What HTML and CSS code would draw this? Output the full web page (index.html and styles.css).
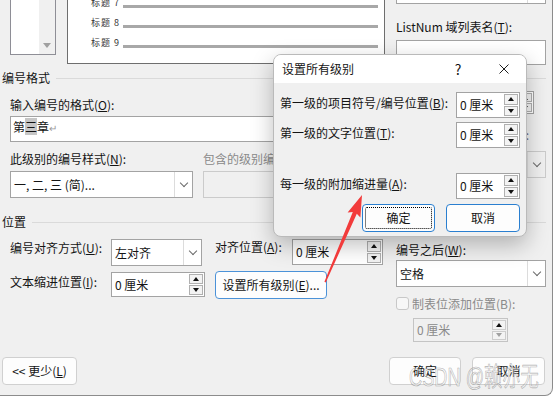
FILE: index.html
```html
<!DOCTYPE html>
<html lang="zh-CN">
<head>
  <meta charset="UTF-8">
  <meta name="viewport" content="width=device-width, initial-scale=1.0">
  <title>定义新多级列表</title>
  <link rel="stylesheet" href="styles.css">
</head>
<body>
  <div class="dlg">
    <div class="top">
      <div class="levels">
        <div class="levels-list"></div>
        <div class="levels-bar"><span class="tri-down"></span></div>
      </div>
      <div class="preview">
        <div class="pv-row first"><span class="pv-label">标题 7</span><span class="pv-line"></span></div>
        <div class="pv-row"><span class="pv-label">标题 8</span><span class="pv-line"></span></div>
        <div class="pv-row"><span class="pv-label">标题 9</span><span class="pv-line"></span></div>
      </div>
      <div class="side">
        <div class="combo cut"><span class="val"></span><span class="drop"></span></div>
        <div class="lbl listnum">ListNum 域列表名(<u>T</u>):</div>
        <div class="box listnum-box"></div>
      </div>
    </div>

    <div class="section">编号格式</div>
    <div class="band">
      <div class="left">
        <div class="lbl fmt-lbl">输入编号的格式(<u>O</u>):</div>
        <div class="box fmt">第<span class="hl">三</span>章<span class="ret">↵</span></div>
        <div class="pair">
          <div class="col-a">
            <div class="lbl">此级别的编号样式(<u>N</u>):</div>
            <div class="combo"><span class="val">一, 二, 三 (简)...</span><span class="drop"></span></div>
          </div>
          <div class="col-b">
            <div class="lbl off">包含的级别编号来自(<u>D</u>):</div>
            <div class="combo off"><span class="val"></span><span class="drop"></span></div>
          </div>
        </div>
      </div>
      <div class="right">
        <div class="start-row">
          <span class="lbl">起始编号(<u>S</u>):</span>
          <div class="spin start"><span class="val">三</span><span class="arrows"><span class="arr"><i class="up"></i></span><span class="arr"><i class="dn"></i></span></span></div>
        </div>
        <div class="lbl off restart-lbl">重新开始列表的间隔(<u>R</u>):</div>
        <div class="combo off restart"><span class="val"></span><span class="drop"></span></div>
      </div>
    </div>

    <div class="section pos">位置</div>
    <div class="band">
      <div class="left">
        <div class="row r1">
          <span class="lbl w-align">编号对齐方式(<u>U</u>):</span>
          <div class="combo align"><span class="val">左对齐</span><span class="drop"></span></div>
          <span class="lbl w-at">对齐位置(<u>A</u>):</span>
          <div class="spin at"><span class="val">0 厘米</span><span class="arrows"><span class="arr"><i class="up"></i></span><span class="arr"><i class="dn"></i></span></span></div>
        </div>
        <div class="row r2">
          <span class="lbl w-indent">文本缩进位置(<u>I</u>):</span>
          <div class="spin indent"><span class="val">0 厘米</span><span class="arrows"><span class="arr"><i class="up"></i></span><span class="arr"><i class="dn"></i></span></span></div>
          <div class="btn setall">设置所有级别(<u>E</u>)...</div>
        </div>
      </div>
      <div class="right">
        <div class="lbl after-lbl">编号之后(<u>W</u>):</div>
        <div class="combo after"><span class="val">空格</span><span class="drop"></span></div>
        <div class="check-row"><span class="check"></span><span class="lbl off">制表位添加位置(B):</span></div>
        <div class="spin tabpos off"><span class="val">0 厘米</span><span class="arrows"><span class="arr"><i class="up"></i></span><span class="arr"><i class="dn"></i></span></span></div>
      </div>
    </div>

    <div class="foot">
      <div class="btn less">&lt;&lt; 更少(<u>L</u>)</div>
      <div class="btn ok">确定</div>
      <div class="btn cancel">取消</div>
    </div>

    <!-- popup dialog on top -->
    <div class="sub">
      <div class="sub-title">
        <span class="sub-name">设置所有级别</span>
        <span class="sub-help">?</span>
        <span class="sub-close"><svg width="10" height="10" viewBox="0 0 10 10"><path d="M0.5 0.5 L9.5 9.5 M9.5 0.5 L0.5 9.5" stroke="#1e1e1e" stroke-width="1" fill="none"/></svg></span>
      </div>
      <div class="sub-body">
        <div class="sub-row r-b">
          <span class="lbl">第一级的项目符号/编号位置(<u>B</u>):</span>
          <div class="spin"><span class="val">0 厘米</span><span class="arrows"><span class="arr"><i class="up"></i></span><span class="arr"><i class="dn"></i></span></span></div>
        </div>
        <div class="sub-row r-t">
          <span class="lbl">第一级的文字位置(<u>T</u>):</span>
          <div class="spin"><span class="val">0 厘米</span><span class="arrows"><span class="arr"><i class="up"></i></span><span class="arr"><i class="dn"></i></span></span></div>
        </div>
        <div class="sub-row r-a">
          <span class="lbl">每一级的附加缩进量(<u>A</u>):</span>
          <div class="spin"><span class="val">0 厘米</span><span class="arrows"><span class="arr"><i class="up"></i></span><span class="arr"><i class="dn"></i></span></span></div>
        </div>
        <div class="sub-foot">
          <div class="btn blue focus">确定</div>
          <div class="btn blue">取消</div>
        </div>
      </div>
    </div>

    <svg class="arrow" width="50" height="100" viewBox="0 0 50 100">
      <polygon points="42,5 40.4,27.6 36.8,23.8 5.8,92.4 4.4,91.8 32.8,22 27.6,22.4" fill="#f23b3b"/>
    </svg>

    <div class="mark">CSDN @赖亦无</div>
  </div>
</body>
</html>
```

FILE: styles.css
```css
body {
  margin: 0;
  background: #fff;
  font-family: "Noto Sans CJK SC", sans-serif;
  font-size: 12px;
  line-height: 16px;
  color: #141414;
}
u {
  text-decoration-thickness: 1px;
  text-underline-offset: 1px;
}
.dlg {
  position: relative;
  width: 553px;
  height: 396px;
  box-sizing: border-box;
  background: #f0f0f0;
  border-right: 1px solid #8c8c8c;
  border-bottom: 1px solid #8c8c8c;
  border-bottom-right-radius: 8px;
  overflow: hidden;
}
.lbl {
  white-space: nowrap;
}
.off {
  color: #8a8a8a;
}

/* top strip */
.top {
  display: flex;
  height: 65px;
}
.levels {
  display: flex;
  margin-left: 10px;
  width: 46px;
  height: 55px;
  box-sizing: border-box;
  border: 1px solid #8e8e96;
  border-top: 0;
  background: #fff;
}
.levels-list {
  flex: 1;
}
.levels-bar {
  width: 16px;
  background: #f0f0f0;
  display: flex;
  align-items: flex-end;
  justify-content: center;
  padding-bottom: 6px;
  box-sizing: border-box;
}
.tri-down {
  border-left: 4px solid transparent;
  border-right: 4px solid transparent;
  border-top: 5px solid #a0a0a0;
}
.preview {
  margin-left: 11px;
  width: 318px;
  height: 64px;
  box-sizing: border-box;
  border: 1px solid #6e6e6e;
  border-top: 0;
  background: #fff;
  overflow: hidden;
}
.pv-row {
  display: flex;
  align-items: flex-end;
  height: 20px;
  padding-left: 23px;
}
.pv-row.first {
  margin-top: -11px;
}
.pv-label {
  width: 32px;
  font-size: 9px;
  line-height: 10px;
  margin-bottom: 1px;
  letter-spacing: 1px;
  color: #333;
}
.pv-line {
  flex: 1;
  height: 3px;
  background: #a8a8a8;
  margin: 0 6px 1px 0;
}
.side {
  margin-left: 11px;
  width: 150px;
}
.listnum {
  margin-top: 15px;
}
.listnum-box {
  height: 25px;
  margin-top: 5px;
  border-color: #b8b8b8;
}

/* generic controls */
.box {
  box-sizing: border-box;
  border: 1px solid #a3a3a3;
  background: #fff;
}
.combo {
  display: flex;
  height: 27px;
  box-sizing: border-box;
  border: 1px solid #a3a3a3;
  background: #fff;
}
.combo .val {
  flex: 1;
  align-self: center;
  padding-left: 3px;
  white-space: nowrap;
  overflow: hidden;
}
.combo .drop {
  width: 17px;
  border-left: 1px solid #dcdcdc;
  display: flex;
  align-items: center;
  justify-content: center;
}
.combo .drop::after {
  content: "";
  width: 5px;
  height: 5px;
  border-right: 1px solid #6a6a6a;
  border-bottom: 1px solid #6a6a6a;
  transform: rotate(45deg);
  margin-top: -3px;
}
.combo.off {
  background: #f0f0f0;
  border-color: #cbcbcb;
}
.combo.cut {
  height: 4px;
  border-top: 0;
}
.combo.cut .drop::after {
  display: none;
}
.spin {
  display: flex;
  box-sizing: border-box;
  border: 1px solid #a3a3a3;
  background: #fff;
}
.spin .val {
  flex: 1;
  align-self: center;
  padding-left: 3px;
  white-space: nowrap;
}
.spin .arrows {
  display: flex;
  flex-direction: column;
  width: 14px;
  padding: 1px 1px 1px 0;
  gap: 1px;
}
.arr {
  flex: 1;
  display: flex;
  align-items: center;
  justify-content: center;
  border: 1px solid #b0b0b0;
  background: #f3f3f3;
}
.up {
  border-left: 3px solid transparent;
  border-right: 3px solid transparent;
  border-bottom: 4px solid #111;
}
.dn {
  border-left: 3px solid transparent;
  border-right: 3px solid transparent;
  border-top: 4px solid #111;
}
.spin.off {
  background: #f0f0f0;
  border-color: #c4c4c4;
}
.spin.off .arr {
  border-color: #cdcdcd;
}
.spin.off .dn {
  border-top-color: #a0a0a0;
}
.btn {
  display: flex;
  align-items: center;
  justify-content: center;
  height: 28px;
  box-sizing: border-box;
  border: 1px solid #d0d0d0;
  border-radius: 4px;
  background: #fdfdfd;
  white-space: nowrap;
}
.btn.blue {
  border-color: #2a7fd0;
}

/* section headers */
.section {
  display: flex;
  align-items: center;
  height: 16px;
  margin-top: 5px;
  padding-left: 2px;
  white-space: nowrap;
}
.section::after {
  content: "";
  flex: 1;
  height: 1px;
  background: #dadada;
  margin: 0 6px;
}
.section.pos {
  margin-top: 16px;
}

/* two-column bands */
.band {
  display: flex;
}
.left {
  margin-left: 10px;
  width: 375px;
}
.right {
  margin-left: 11px;
  width: 150px;
}
.fmt-lbl {
  margin-top: 11px;
}
.fmt {
  height: 26px;
  margin-top: 3px;
  padding: 2px 0 0 2px;
  white-space: nowrap;
}
.hl {
  background: #c6c6c6;
}
.ret {
  color: #9a9a9a;
  font-size: 10px;
}
.pair {
  display: flex;
  margin-top: 9px;
}
.col-a {
  width: 183px;
}
.col-b {
  margin-left: 10px;
  width: 182px;
}
.pair .combo {
  margin-top: 4px;
}
.start-row {
  display: flex;
  justify-content: space-between;
  margin-top: 5px;
  padding-right: 12px;
  height: 23px;
}
.spin.start {
  width: 64px;
}
.restart-lbl {
  margin-top: 13px;
  letter-spacing: 0.5px;
  color: #6a6a7a;
}
.combo.restart {
  margin-top: 8px;
}
.row {
  display: flex;
  align-items: flex-start;
}
.r1 {
  margin-top: 9px;
}
.w-align {
  width: 101px;
  margin-top: 1px;
}
.combo.align {
  width: 91px;
}
.w-at {
  width: 77px;
  margin-left: 13px;
}
.spin.at {
  width: 91px;
  height: 26px;
}
.r2 {
  margin-top: 5px;
}
.w-indent {
  width: 101px;
  margin-top: 3px;
}
.spin.indent {
  width: 94px;
  height: 25px;
  margin-top: 1px;
}
.setall {
  width: 112px;
  margin-left: 10px;
  border-color: #4b92d8;
}
.after-lbl {
  margin-top: 12px;
}
.combo.after {
  margin-top: 2px;
}
.check-row {
  display: flex;
  align-items: center;
  height: 13px;
  margin-top: 10px;
}
.check {
  width: 13px;
  height: 13px;
  box-sizing: border-box;
  border: 1px solid #c8c8c8;
  border-radius: 3px;
  background: #f7f7f7;
  margin-right: 3px;
}
.spin.tabpos {
  width: 95px;
  height: 24px;
  margin: 8px 0 0 17px;
}

/* bottom buttons */
.foot {
  display: flex;
  margin-top: 15px;
  padding: 0 7px 0 2px;
}
.less {
  width: 75px;
}
.foot .ok {
  margin-left: auto;
  width: 72px;
}
.foot .cancel {
  margin-left: 11px;
  width: 73px;
}

/* popup */
.sub {
  position: absolute;
  left: 273px;
  top: 54px;
  width: 254px;
  height: 183px;
  box-sizing: border-box;
  border: 1px solid #bababa;
  border-radius: 8px;
  background: #f0f0f0;
  box-shadow: 0 8px 22px rgba(0, 0, 0, 0.26);
  overflow: hidden;
}
.sub-title {
  display: flex;
  align-items: center;
  height: 28px;
  background: #fff;
}
.sub-name {
  flex: 1;
  padding-left: 8px;
}
.sub-help {
  width: 48px;
  text-align: center;
  font-size: 14px;
}
.sub-close {
  width: 44px;
  display: flex;
  justify-content: center;
}
.sub-body {
  padding: 0 6px;
}
.sub-row {
  display: flex;
  justify-content: space-between;
  height: 26px;
}
.sub-row .lbl {
  margin-top: 3px;
}
.sub-row .spin {
  width: 64px;
  height: 26px;
}
.r-b {
  margin-top: 9px;
}
.r-t {
  margin-top: 4px;
}
.r-a {
  margin-top: 25px;
}
.sub-foot {
  display: flex;
  justify-content: flex-end;
  gap: 11px;
  margin-top: 5px;
}
.sub-foot .btn {
  width: 74px;
}
.sub-foot .btn.focus {
  width: 73px;
  position: relative;
}
.btn.focus::after {
  content: "";
  position: absolute;
  inset: 2px;
  border: 1px dotted #000;
  border-radius: 2px;
}

/* annotation overlays */
.arrow {
  position: absolute;
  left: 320px;
  top: 190px;
}
.mark {
  position: absolute;
  left: 409px;
  top: 364px;
  font-family: "Liberation Sans", "Noto Sans CJK SC", sans-serif;
  font-size: 26px;
  line-height: 26px;
  white-space: nowrap;
  transform: scaleX(0.7);
  transform-origin: left top;
  color: rgba(250, 250, 250, 0.45);
  -webkit-text-stroke: 0.7px rgba(100, 100, 100, 0.5);
}
```
